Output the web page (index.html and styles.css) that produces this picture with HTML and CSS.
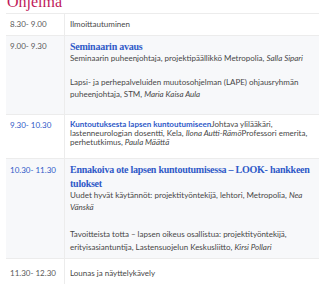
FILE: index.html
```html
<!DOCTYPE html>
<html lang="fi">
<head>
<meta charset="utf-8">
<link rel="stylesheet" href="styles.css">
</head>
<body>
<h2 class="heading">Ohjelma</h2>
<table class="program">
  <tr class="row r1">
    <td class="time">8.30- 9.00</td>
    <td class="content">Ilmoittautuminen</td>
  </tr>
  <tr class="row alt r2">
    <td class="time">9.00- 9.30</td>
    <td class="content">
      <div class="title">Seminaarin avaus</div>
      <p class="para p-a">Seminaarin puheenjohtaja, projektipäällikkö Metropolia, <em>Salla Sipari</em></p>
      <p class="para p-b">Lapsi- ja perhepalveluiden muutosohjelman (LAPE) ohjausryhmän puheenjohtaja, STM, <em>Maria Kaisa Aula</em></p>
    </td>
  </tr>
  <tr class="row r3">
    <td class="time link">9.30- 10.30</td>
    <td class="content">
      <p class="para p-tight"><strong class="link">Kuntoutuksesta lapsen kuntoutumiseen</strong>Johtava ylilääkäri, lastenneurologian dosentti, Kela, <em>Ilona Autti-Rämö</em>Professori emerita, perhetutkimus, <em>Paula Määttä</em></p>
    </td>
  </tr>
  <tr class="row alt r4">
    <td class="time link">10.30- 11.30</td>
    <td class="content">
      <div class="title title-2">Ennakoiva ote lapsen kuntoutumisessa – LOOK- hankkeen tulokset</div>
      <p class="para p-c">Uudet hyvät käytännöt: projektityöntekijä, lehtori, Metropolia, <em>Nea Vänskä</em></p>
      <p class="para p-d">Tavoitteista totta – lapsen oikeus osallistua: projektityöntekijä, erityisasiantuntija, Lastensuojelun Keskusliitto, <em>Kirsi Pollari</em></p>
    </td>
  </tr>
  <tr class="row r5">
    <td class="time">11.30- 12.30</td>
    <td class="content">Lounas ja näyttelykävely</td>
  </tr>
</table>
</body>
</html>
```
FILE: styles.css
```css
html, body {
  margin: 0;
  padding: 0;
  background: #ffffff;
}
body {
  font-family: Lato, "Noto Sans", sans-serif;
  font-size: 8px;
  color: #474747;
  padding: 0 6px;
}
.heading {
  margin: -6px 0 3px 1px;
  height: 16px;
  font-family: "Liberation Serif", serif;
  font-weight: normal;
  font-size: 16px;
  line-height: 16px;
  color: #c0195a;
}
.program {
  border-collapse: collapse;
  width: 313px;
}
.row td {
  border-top: 1px solid #ececec;
  border-bottom: 1px solid #ececec;
  vertical-align: top;
}
.row.alt td {
  background: #f7f8fa;
}
.time {
  width: 50px;
  padding: 5px 4px 5px 4px;
  line-height: 11px;
  white-space: nowrap;
  border-right: 1px solid #ececec;
  color: #5a5a5a;
}
.content {
  padding: 5px 4px 5px 5px;
  line-height: 11px;
}
.r4 .time {
  padding-top: 5px;
  line-height: 13px;
}
.r4 .content {
  padding-top: 4px;
  padding-bottom: 4px;
}
.r5 .time, .r5 .content {
  padding-top: 9px;
  padding-bottom: 12px;
}
.link {
  color: #2f5ac8;
}
strong.link {
  font-weight: bold;
}
.title {
  color: #2f5ac8;
  font-family: "Liberation Serif", serif;
  font-weight: bold;
  font-size: 10px;
  letter-spacing: -0.25px;
  line-height: 12px;
}
.title-2 {
  line-height: 13.5px;
}
.para {
  margin: 0;
}
.p-a {
  line-height: 11px;
  margin-bottom: 13px;
}
.p-b {
  line-height: 11.5px;
  margin-bottom: 9px;
}
.p-tight {
  line-height: 9px;
  margin-bottom: 6px;
}
.p-c {
  line-height: 11.5px;
  margin-bottom: 15px;
}
.p-d {
  line-height: 12.5px;
  margin-bottom: 1px;
}
em {
  font-style: italic;
}
```
